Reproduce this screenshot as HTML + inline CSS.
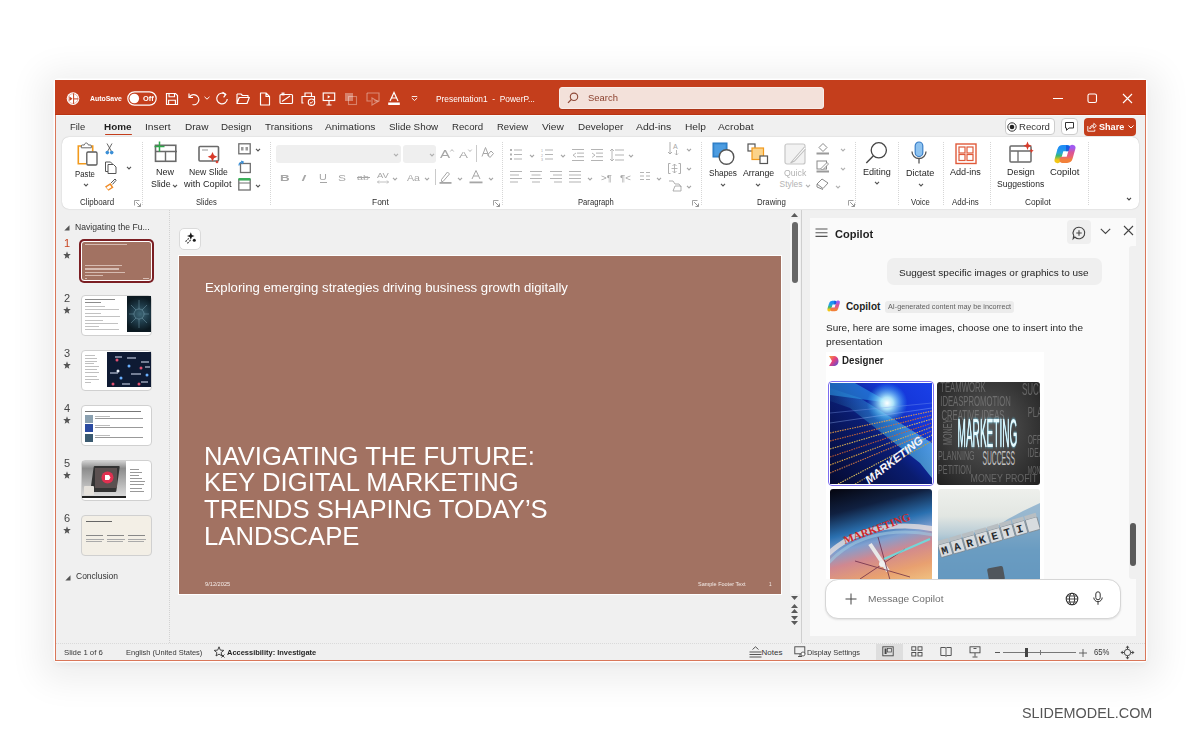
<!DOCTYPE html>
<html><head><meta charset="utf-8">
<style>
*{margin:0;padding:0;box-sizing:border-box}
html,body{width:1200px;height:743px;overflow:hidden;background:#fff;font-family:"Liberation Sans",sans-serif;color:#242424}
.a{position:absolute}
.t{position:absolute;white-space:nowrap;line-height:1}
svg{position:absolute;overflow:visible}
</style></head><body>
<div class="a" style="left:55px;top:80px;width:1091.00px;height:581.00px;border-radius:3px;box-shadow:0 0 0 1.5px #fff,0 6px 34px 14px rgba(0,0,0,.07),0 3px 6px rgba(0,0,0,.05)"></div>
<div class="a" style="left:55px;top:80px;width:1091.00px;height:581.00px;background:#f0f0f0;border:1px solid #d9775a;border-top:none"></div>
<div class="a" style="left:55px;top:80px;width:1091.00px;height:35.00px;background:#c43e1c"></div>
<div class="t" style="left:1021.78px;top:706.62px;font-size:13.8px;color:#555555;transform:scaleX(1.043);transform-origin:0 0;">SLIDEMODEL.COM</div>
<div class="a" style="left:55px;top:114px;width:1091.00px;height:1.00px;background:#b93311"></div>
<div class="a" style="left:56px;top:115px;width:1089.00px;height:1.00px;background:#f8f8f8"></div>
<svg style="left:66px;top:92px;" width="14" height="14" viewBox="0 0 14 14"><circle cx="7" cy="6.6" r="6.3" fill="#fff"/><path d="M7.6 1.3V11.9M7.6 6.9h4.8" stroke="#c43e1c" stroke-width="1"/><path d="M3.3 4.3v4.8l3.2-2.4z" fill="#c43e1c"/><circle cx="7" cy="6.6" r="4.9" fill="none" stroke="#c43e1c" stroke-width=".6" opacity=".6"/></svg>
<div class="t" style="left:90.45px;top:95.11px;font-size:7.2px;color:#ffffff;font-weight:bold;transform:scaleX(0.961);transform-origin:0 0;">AutoSave</div>
<svg style="left:127px;top:90.5px;" width="30" height="15" viewBox="0 0 30 15"><rect x="0.8" y="0.8" width="28.4" height="13.4" rx="6.7" fill="none" stroke="#fff" stroke-width="1.2"/><circle cx="7.3" cy="7.5" r="4.8" fill="#fff"/></svg>
<div class="t" style="left:142.63px;top:95.11px;font-size:7.2px;color:#ffffff;font-weight:bold;transform:scaleX(1.031);transform-origin:0 0;">Off</div>
<svg style="left:165px;top:91.5px;" width="14" height="14" viewBox="0 0 14 14"><path d="M1.5 1.5h9l2 2v9h-11z" fill="none" stroke="#fff" stroke-width="1.2"/><path d="M4 1.5v3.2h5.5V1.5M3.6 12.5V8.2h6.8v4.3" fill="none" stroke="#fff" stroke-width="1.1"/></svg>
<svg style="left:186px;top:91px;" width="14" height="15" viewBox="0 0 14 15"><path d="M3 2.5v4h4" fill="none" stroke="#fff" stroke-width="1.2"/><path d="M3.4 6.3A5 5 0 1 1 6.5 13.5" fill="none" stroke="#fff" stroke-width="1.2"/></svg>
<svg style="left:204px;top:96px;" width="6" height="4" viewBox="0 0 6 4"><path d="M0.5 0.8L3 3.2L5.5 0.8" fill="none" stroke="#fff" stroke-width="1"/></svg>
<svg style="left:215px;top:91px;" width="14" height="15" viewBox="0 0 14 15"><path d="M10.5 3.5A5.3 5.3 0 1 0 12.3 8" fill="none" stroke="#fff" stroke-width="1.2"/><path d="M7.5 1.2l3.3 2.2-2.2 3" fill="none" stroke="#fff" stroke-width="1.2"/></svg>
<svg style="left:236px;top:92px;" width="14" height="13" viewBox="0 0 14 13"><path d="M1 2h4l1.5 1.5H12v2M1 2v9.5h10l2.3-6H3.2L1 11.5" fill="none" stroke="#fff" stroke-width="1.15" stroke-linejoin="round"/></svg>
<svg style="left:259px;top:91.5px;" width="12" height="14" viewBox="0 0 12 14"><path d="M1.5 1h5.5l3.5 3.5v8.5h-9z M7 1v3.5h3.5" fill="none" stroke="#fff" stroke-width="1.15" stroke-linejoin="round"/></svg>
<svg style="left:279px;top:92px;" width="15" height="13" viewBox="0 0 15 13"><rect x="1" y="2.5" width="12.5" height="9" rx="1" fill="none" stroke="#fff" stroke-width="1.15"/><path d="M3 9.5l8-5.5" stroke="#fff" stroke-width="1.1"/><path d="M2.5 0.5h3v3h-3z" fill="#fff" opacity=".85"/></svg>
<svg style="left:301px;top:91.5px;" width="15" height="14" viewBox="0 0 15 14"><path d="M4 4.5V1h6.5v3.5M2.5 11H1V4.5h12.5V8" fill="none" stroke="#fff" stroke-width="1.15"/><circle cx="10.5" cy="10.2" r="3.2" fill="#c43e1c" stroke="#fff" stroke-width="1.15"/><path d="M9 10.3l1.1 1 1.8-2" fill="none" stroke="#fff" stroke-width="1"/></svg>
<svg style="left:322px;top:91.5px;" width="14" height="14" viewBox="0 0 14 14"><rect x="1.2" y="1" width="11.5" height="7.5" fill="none" stroke="#fff" stroke-width="1.15"/><path d="M5.7 3.2v3.2l2.6-1.6z" fill="#fff"/><path d="M7 8.5v4.5M4.5 13h5" stroke="#fff" stroke-width="1.15"/></svg>
<svg style="left:344px;top:92px;" width="14" height="14" viewBox="0 0 14 14"><rect x="1" y="1" width="8" height="8" fill="#fff" opacity=".35"/><rect x="4.5" y="4.5" width="8" height="8" fill="none" stroke="#fff" stroke-width="1.1" opacity=".35"/></svg>
<svg style="left:366px;top:92px;" width="15" height="14" viewBox="0 0 15 14"><path d="M1 1h12v8H8" fill="none" stroke="#fff" stroke-width="1.1" opacity=".4"/><path d="M1 1v8h4M6 6l6 3.5-6 3.5z" fill="none" stroke="#fff" stroke-width="1.1" opacity=".4"/></svg>
<svg style="left:387px;top:91px;" width="14" height="15" viewBox="0 0 14 15"><path d="M3 10L7 1.5 11 10M4.6 7h4.8" fill="none" stroke="#fff" stroke-width="1.2"/><rect x="1.2" y="11.5" width="11.6" height="2.5" fill="#fff"/></svg>
<svg style="left:411px;top:96px;" width="7" height="5" viewBox="0 0 7 5"><path d="M0.8 0.5h5.4M0.8 2l2.7 2.5L6.2 2" fill="none" stroke="#fff" stroke-width="0.9"/></svg>
<div class="t" style="left:435.58px;top:94.58px;font-size:9.0px;color:#ffffff;transform:scaleX(0.930);transform-origin:0 0;">Presentation1&nbsp; -&nbsp; PowerP...</div>
<div class="a" style="left:558.5px;top:86.8px;width:265.50px;height:22.70px;background:#f3e1da;border:1px solid #f8ece8;border-radius:3px;box-shadow:0 1px 0 rgba(0,0,0,.12)"></div>
<svg style="left:567px;top:92px;" width="12" height="12" viewBox="0 0 12 12"><circle cx="7" cy="4.8" r="3.7" fill="none" stroke="#8e4a38" stroke-width="1.1"/><path d="M4.3 7.5L1 10.8" stroke="#8e4a38" stroke-width="1.2"/></svg>
<div class="t" style="left:587.53px;top:94.18px;font-size:9.0px;color:#8a3f2c;transform:scaleX(1.048);transform-origin:0 0;">Search</div>
<div class="a" style="left:1053px;top:97.5px;width:10.00px;height:1.00px;background:#fff"></div>
<svg style="left:1087px;top:93px;" width="11" height="11" viewBox="0 0 11 11"><rect x="1" y="1" width="8.5" height="8.5" rx="1.6" fill="none" stroke="#fff" stroke-width="1.1"/></svg>
<svg style="left:1122px;top:93px;" width="11" height="11" viewBox="0 0 11 11"><path d="M1 1l9 9M10 1l-9 9" stroke="#fff" stroke-width="1.1"/></svg>
<div class="t" style="left:70.33px;top:122.68px;font-size:9.0px;color:#2e2e2e;transform:scaleX(1.041);transform-origin:0 0;">File</div>
<div class="t" style="left:104.21px;top:122.68px;font-size:9.0px;color:#1f1f1f;font-weight:bold;transform:scaleX(1.100);transform-origin:0 0;">Home</div>
<div class="t" style="left:144.79px;top:122.68px;font-size:9.0px;color:#2e2e2e;transform:scaleX(1.137);transform-origin:0 0;">Insert</div>
<div class="t" style="left:184.50px;top:122.68px;font-size:9.0px;color:#2e2e2e;transform:scaleX(1.114);transform-origin:0 0;">Draw</div>
<div class="t" style="left:220.81px;top:122.68px;font-size:9.0px;color:#2e2e2e;transform:scaleX(1.085);transform-origin:0 0;">Design</div>
<div class="t" style="left:264.81px;top:122.68px;font-size:9.0px;color:#2e2e2e;transform:scaleX(1.090);transform-origin:0 0;">Transitions</div>
<div class="t" style="left:325.29px;top:122.68px;font-size:9.0px;color:#2e2e2e;transform:scaleX(1.132);transform-origin:0 0;">Animations</div>
<div class="t" style="left:389.21px;top:122.68px;font-size:9.0px;color:#2e2e2e;transform:scaleX(1.093);transform-origin:0 0;">Slide Show</div>
<div class="t" style="left:451.92px;top:122.68px;font-size:9.0px;color:#2e2e2e;transform:scaleX(1.072);transform-origin:0 0;">Record</div>
<div class="t" style="left:497.33px;top:122.68px;font-size:9.0px;color:#2e2e2e;transform:scaleX(1.054);transform-origin:0 0;">Review</div>
<div class="t" style="left:542.49px;top:122.68px;font-size:9.0px;color:#2e2e2e;transform:scaleX(1.132);transform-origin:0 0;">View</div>
<div class="t" style="left:577.80px;top:122.68px;font-size:9.0px;color:#2e2e2e;transform:scaleX(1.102);transform-origin:0 0;">Developer</div>
<div class="t" style="left:636.08px;top:122.68px;font-size:9.0px;color:#2e2e2e;transform:scaleX(1.157);transform-origin:0 0;">Add-ins</div>
<div class="t" style="left:685.09px;top:122.68px;font-size:9.0px;color:#2e2e2e;transform:scaleX(1.134);transform-origin:0 0;">Help</div>
<div class="t" style="left:718.48px;top:122.68px;font-size:9.0px;color:#2e2e2e;transform:scaleX(1.145);transform-origin:0 0;">Acrobat</div>
<div class="a" style="left:104.5px;top:133.5px;width:27.50px;height:1.80px;background:#c43e1c;border-radius:1px"></div>
<div class="a" style="left:1004.8px;top:117.6px;width:50.00px;height:17.90px;background:#fff;border:1px solid #cdcdcd;border-radius:4px"></div>
<svg style="left:1007px;top:121.5px;" width="11" height="11" viewBox="0 0 11 11"><circle cx="5" cy="5" r="4.2" fill="none" stroke="#333" stroke-width="1"/><circle cx="5" cy="5" r="2.3" fill="#222"/></svg>
<div class="t" style="left:1018.92px;top:122.68px;font-size:9.0px;color:#333;transform:scaleX(1.065);transform-origin:0 0;">Record</div>
<div class="a" style="left:1060.6px;top:117.6px;width:17.40px;height:17.90px;background:#fff;border:1px solid #cdcdcd;border-radius:4px"></div>
<svg style="left:1064px;top:121px;" width="11" height="11" viewBox="0 0 11 11"><path d="M1.5 1.5h8v5.5H5l-2.5 2.3V7H1.5z" fill="none" stroke="#333" stroke-width="1" stroke-linejoin="round"/></svg>
<div class="a" style="left:1084px;top:118px;width:52.00px;height:17.50px;background:#c43e1c;border-radius:4px"></div>
<svg style="left:1086.5px;top:121.5px;" width="10" height="10" viewBox="0 0 10 10"><path d="M.8 4v5.2h7V7.5" fill="none" stroke="#fff" stroke-width=".9"/><path d="M2.8 7c0-2.5 1.6-3.8 4-3.8V1.3l2.6 2.5-2.6 2.5V4.6c-1.6 0-2.8.6-4 2.4z" fill="none" stroke="#fff" stroke-width=".9" stroke-linejoin="round"/></svg>
<div class="t" style="left:1098.95px;top:122.63px;font-size:9.3px;color:#fff;font-weight:bold;transform:scaleX(0.976);transform-origin:0 0;">Share</div>
<svg style="left:1128px;top:125px;" width="6" height="4" viewBox="0 0 6 4"><path d="M0.5 0.5L3 3 5.5 0.5" fill="none" stroke="#fff" stroke-width="1"/></svg>
<div class="a" style="left:61.5px;top:137px;width:1077.50px;height:72.00px;background:#fff;border-radius:7px;box-shadow:0 0 1.2px rgba(0,0,0,.28)"></div>
<svg style="left:75px;top:142px;" width="24" height="24" viewBox="0 0 24 24"><path d="M7 4H3.3V21.8H11" fill="none" stroke="#f29a1d" stroke-width="1.6"/><path d="M14.5 4h3.2v5.5" fill="none" stroke="#f29a1d" stroke-width="1.6"/><path d="M6.3 5.8V4c0-.6.5-1 1-1h2c.3-1.3 1-2 2-2s1.7.7 2 2h2c.6 0 1 .4 1 1v1.8z" fill="#fff" stroke="#6a6a6a" stroke-width="1"/><rect x="11.8" y="10" width="10.2" height="13" rx="1.2" fill="#fff" stroke="#5a5a5a" stroke-width="1.3"/></svg>
<div class="t" style="left:75.31px;top:169.59px;font-size:8.4px;color:#262626;transform:scaleX(0.928);transform-origin:0 0;">Paste</div>
<svg style="left:82.5px;top:182.5px;" width="6" height="4" viewBox="0 0 6 4"><path d="M1 0.9L3 2.9 5 0.9" fill="none" stroke="#555" stroke-width="1.15"/></svg>
<svg style="left:105px;top:143px;" width="9" height="12" viewBox="0 0 9 12"><path d="M2 .5l4.5 8M7 .5L2.5 8.5" stroke="#555" stroke-width="0.9" fill="none"/><circle cx="2.3" cy="9.6" r="1.8" fill="#3b8fd6"/><circle cx="6.7" cy="9.6" r="1.8" fill="#3b8fd6"/></svg>
<svg style="left:103.5px;top:160.5px;" width="13" height="13" viewBox="0 0 13 13"><path d="M4 10.5H1.5V1h5l2 2" fill="none" stroke="#555" stroke-width="1"/><path d="M4 3.5h5.5l2.5 2.5v6.5H4z" fill="#fff" stroke="#555" stroke-width="1"/></svg>
<svg style="left:125.5px;top:165.5px;" width="6" height="4" viewBox="0 0 6 4"><path d="M1 0.9L3 2.9 5 0.9" fill="none" stroke="#555" stroke-width="1.15"/></svg>
<svg style="left:103.5px;top:178px;" width="13" height="13" viewBox="0 0 13 13"><path d="M1 8.5l5.5-3.5 3 4.5-5 3.2z" fill="#f08a24"/><path d="M2.5 9.2L6 7l1.5 2.3-3.5 2.2z" fill="#fff"/><path d="M7 5l4-4 1.2 1.2-3.7 4.2" fill="none" stroke="#555" stroke-width="1"/></svg>
<div class="t" style="left:80.20px;top:198.86px;font-size:8.2px;color:#2e2e2e;transform:scaleX(0.972);transform-origin:0 0;">Clipboard</div>
<svg style="left:133.5px;top:199.5px;" width="7" height="7" viewBox="0 0 7 7"><path d="M0.5 5.5v-5h5" fill="none" stroke="#8a8a8a" stroke-width="0.8"/><path d="M2.2 2.2l4 4M3.5 6.5h3v-3" fill="none" stroke="#777" stroke-width="0.8"/></svg>
<div class="a" style="left:142px;top:142px;width:1.00px;height:64.00px;background:repeating-linear-gradient(#d6d6d6 0 1px,transparent 1px 2px)"></div>
<svg style="left:152.5px;top:141px;" width="26" height="22" viewBox="0 0 26 22"><rect x="2.5" y="4.3" width="20.3" height="16" fill="#fff" stroke="#6a6a6a" stroke-width="1.6"/><path d="M2.5 10.5h21.5M12.5 10.5V20" stroke="#6a6a6a" stroke-width="1.4"/><path d="M6.5 0.5v10M1.5 5.5h10" stroke="#2ea84a" stroke-width="1.5"/></svg>
<div class="t" style="left:155.95px;top:168.49px;font-size:8.4px;color:#262626;transform:scaleX(1.079);transform-origin:0 0;">New</div>
<div class="t" style="left:150.56px;top:180.39px;font-size:8.4px;color:#262626;transform:scaleX(1.057);transform-origin:0 0;">Slide</div>
<svg style="left:172px;top:183.5px;" width="6" height="4" viewBox="0 0 6 4"><path d="M1 0.9L3 2.9 5 0.9" fill="none" stroke="#555" stroke-width="1.15"/></svg>
<svg style="left:197.5px;top:145.2px;" width="25" height="21" viewBox="0 0 25 21"><rect x="1" y="1.5" width="19.5" height="14.5" rx="1" fill="#fff" stroke="#6a6a6a" stroke-width="1.6"/><path d="M4 5h6" stroke="#999" stroke-width="1"/><path d="M14.5 7l1.5 3.3 3.3 1.5-3.3 1.5-1.5 3.3-1.5-3.3-3.3-1.5 3.3-1.5z" fill="#d83b2b"/><path d="M19 15.3l1.6 1.6-1.6 1.6-1.6-1.6z" fill="#d83b2b"/></svg>
<div class="t" style="left:188.57px;top:168.49px;font-size:8.4px;color:#262626;transform:scaleX(1.032);transform-origin:0 0;">New Slide</div>
<div class="t" style="left:184.24px;top:180.39px;font-size:8.4px;color:#262626;transform:scaleX(1.097);transform-origin:0 0;">with Copilot</div>
<svg style="left:237.5px;top:142.5px;" width="13" height="12" viewBox="0 0 13 12"><rect x="0.8" y="0.8" width="11.4" height="10" fill="#fff" stroke="#6f6f6f" stroke-width="1.3"/><path d="M3 4h2.5v3.5H3zM7.5 4H10v3.5H7.5z" fill="#9a9a9a"/></svg>
<svg style="left:254.5px;top:147.5px;" width="6" height="4" viewBox="0 0 6 4"><path d="M1 0.9L3 2.9 5 0.9" fill="none" stroke="#555" stroke-width="1.15"/></svg>
<svg style="left:237.5px;top:160.5px;" width="13" height="12" viewBox="0 0 13 12"><rect x="2.5" y="2.5" width="9.8" height="9" fill="#fff" stroke="#6f6f6f" stroke-width="1.3"/><path d="M1 4.5c0-2.5 2-3.5 4-3.5M3.2 0L5.3 1 4 3" fill="none" stroke="#3b8fd6" stroke-width="1.2"/></svg>
<svg style="left:237.5px;top:178px;" width="13" height="13" viewBox="0 0 13 13"><rect x="0.8" y="1.5" width="11.4" height="10.5" fill="#fff" stroke="#6f6f6f" stroke-width="1.3"/><rect x="0.5" y="0" width="12" height="2.5" fill="#3bb05a"/><path d="M1 5h11" stroke="#6f6f6f" stroke-width="1"/></svg>
<svg style="left:254.5px;top:184px;" width="6" height="4" viewBox="0 0 6 4"><path d="M1 0.9L3 2.9 5 0.9" fill="none" stroke="#555" stroke-width="1.15"/></svg>
<div class="t" style="left:195.62px;top:198.86px;font-size:8.2px;color:#2e2e2e;transform:scaleX(0.928);transform-origin:0 0;">Slides</div>
<div class="a" style="left:270px;top:142px;width:1.00px;height:64.00px;background:repeating-linear-gradient(#d6d6d6 0 1px,transparent 1px 2px)"></div>
<div class="a" style="left:276px;top:145px;width:125.00px;height:17.60px;background:#efefef;border-radius:3px"></div>
<div class="a" style="left:402.6px;top:145px;width:33.40px;height:17.60px;background:#efefef;border-radius:3px"></div>
<svg style="left:393px;top:152.5px;" width="6" height="4" viewBox="0 0 6 4"><path d="M1 0.9L3 2.9 5 0.9" fill="none" stroke="#b0b0b0" stroke-width="1.15"/></svg>
<svg style="left:429px;top:152.5px;" width="6" height="4" viewBox="0 0 6 4"><path d="M1 0.9L3 2.9 5 0.9" fill="none" stroke="#b0b0b0" stroke-width="1.15"/></svg>
<div class="t" style="left:440.24px;top:148.86px;font-size:10.8px;color:#a6a6a6;transform:scaleX(1.399);transform-origin:0 0;">A</div>
<svg style="left:450px;top:148.5px;" width="4" height="3" viewBox="0 0 4 3"><path d="M0.3 2.5L2 .6 3.7 2.5" fill="none" stroke="#a6a6a6" stroke-width=".8"/></svg>
<div class="t" style="left:459.33px;top:149.96px;font-size:9.5px;color:#a6a6a6;transform:scaleX(1.412);transform-origin:0 0;">A</div>
<svg style="left:468px;top:148.5px;" width="4" height="3" viewBox="0 0 4 3"><path d="M0.3 .6L2 2.5 3.7 .6" fill="none" stroke="#a6a6a6" stroke-width=".8"/></svg>
<div class="a" style="left:475.5px;top:145px;width:1.00px;height:17.00px;background:#a6a6a6;opacity:.6"></div>
<svg style="left:481px;top:146px;" width="13" height="12" viewBox="0 0 13 12"><path d="M1 10.5L4.5 1.5 8 10.5M2.2 7.5h4.6" fill="none" stroke="#a6a6a6" stroke-width="1"/><path d="M6.5 9l3.5-4 2.5 2.5-3.5 4z" fill="none" stroke="#a6a6a6" stroke-width="1"/></svg>
<div class="t" style="left:280.33px;top:172.87px;font-size:9.6px;color:#a6a6a6;transform:scaleX(1.399);transform-origin:0 0;font-weight:bold;">B</div>
<div class="t" style="left:301.02px;top:172.87px;font-size:9.6px;color:#a6a6a6;transform:scaleX(2.047);transform-origin:0 0;font-style:italic;">I</div>
<div class="t" style="left:319.46px;top:172.60px;font-size:8.5px;color:#a6a6a6;transform:scaleX(1.279);transform-origin:0 0;">U</div>
<div class="a" style="left:320px;top:181.6px;width:7.00px;height:0.90px;background:#a6a6a6"></div>
<div class="t" style="left:338.40px;top:172.87px;font-size:9.6px;color:#a6a6a6;transform:scaleX(1.243);transform-origin:0 0;">S</div>
<div class="t" style="left:357.47px;top:173.53px;font-size:8px;color:#a6a6a6;transform:scaleX(1.326);transform-origin:0 0;">ab</div>
<div class="a" style="left:357px;top:177.3px;width:13.00px;height:0.80px;background:#a6a6a6"></div>
<div class="t" style="left:376.53px;top:172.03px;font-size:8px;color:#a6a6a6;transform:scaleX(1.171);transform-origin:0 0;">AV</div>
<svg style="left:377px;top:179.8px;" width="12" height="4" viewBox="0 0 12 4"><path d="M0.5 2h11M2 .5L.5 2 2 3.5M10 .5l1.5 1.5L10 3.5" fill="none" stroke="#a6a6a6" stroke-width=".7"/></svg>
<svg style="left:391.5px;top:176.5px;" width="6" height="4" viewBox="0 0 6 4"><path d="M1 0.9L3 2.9 5 0.9" fill="none" stroke="#a6a6a6" stroke-width="1.15"/></svg>
<div class="t" style="left:407.47px;top:172.67px;font-size:9.6px;color:#a6a6a6;transform:scaleX(1.104);transform-origin:0 0;">Aa</div>
<svg style="left:424px;top:176.5px;" width="6" height="4" viewBox="0 0 6 4"><path d="M1 0.9L3 2.9 5 0.9" fill="none" stroke="#a6a6a6" stroke-width="1.15"/></svg>
<div class="a" style="left:434.5px;top:169px;width:1.00px;height:16.00px;background:#a6a6a6;opacity:.6"></div>
<svg style="left:439px;top:170px;" width="13" height="14" viewBox="0 0 13 14"><path d="M2.5 9.5L8.5 2l2 2-6.5 7.5H2.5z" fill="none" stroke="#a6a6a6" stroke-width="1"/><rect x="0.5" y="12" width="12" height="1.8" fill="#a6a6a6"/></svg>
<svg style="left:457px;top:176.5px;" width="6" height="4" viewBox="0 0 6 4"><path d="M1 0.9L3 2.9 5 0.9" fill="none" stroke="#a6a6a6" stroke-width="1.15"/></svg>
<svg style="left:469px;top:169px;" width="14" height="15" viewBox="0 0 14 15"><path d="M3 10L7 1.5 11 10M4.5 7h5" fill="none" stroke="#a6a6a6" stroke-width="1"/><rect x="0.5" y="12.5" width="13" height="1.8" fill="#a6a6a6"/></svg>
<svg style="left:487.5px;top:176.5px;" width="6" height="4" viewBox="0 0 6 4"><path d="M1 0.9L3 2.9 5 0.9" fill="none" stroke="#a6a6a6" stroke-width="1.15"/></svg>
<div class="t" style="left:372.08px;top:198.86px;font-size:8.2px;color:#2e2e2e;transform:scaleX(1.025);transform-origin:0 0;">Font</div>
<svg style="left:493px;top:199.5px;" width="7" height="7" viewBox="0 0 7 7"><path d="M0.5 5.5v-5h5" fill="none" stroke="#8a8a8a" stroke-width="0.8"/><path d="M2.2 2.2l4 4M3.5 6.5h3v-3" fill="none" stroke="#777" stroke-width="0.8"/></svg>
<div class="a" style="left:502px;top:142px;width:1.00px;height:64.00px;background:repeating-linear-gradient(#d6d6d6 0 1px,transparent 1px 2px)"></div>
<svg style="left:510px;top:148.5px;" width="13" height="12" viewBox="0 0 13 12"><rect x="0" y="0" width="2" height="2" fill="#b0b0b0"/><rect x="0" y="4.5" width="2" height="2" fill="#b0b0b0"/><rect x="0" y="9" width="2" height="2" fill="#b0b0b0"/><g transform="translate(4,.5)"><rect x="0" y="0.0" width="8" height="1" fill="#b4b4b4"/><rect x="0" y="4.5" width="8" height="1" fill="#b4b4b4"/><rect x="0" y="9.0" width="8" height="1" fill="#b4b4b4"/></g></svg>
<svg style="left:529px;top:154px;" width="6" height="4" viewBox="0 0 6 4"><path d="M1 0.9L3 2.9 5 0.9" fill="none" stroke="#a6a6a6" stroke-width="1.15"/></svg>
<svg style="left:541px;top:148.5px;" width="13" height="12" viewBox="0 0 13 12"><text x="0" y="3" font-size="3.5" fill="#a6a6a6">1</text><text x="0" y="7.5" font-size="3.5" fill="#a6a6a6">2</text><text x="0" y="12" font-size="3.5" fill="#a6a6a6">3</text><g transform="translate(4,.5)"><rect x="0" y="0.0" width="8" height="1" fill="#b4b4b4"/><rect x="0" y="4.5" width="8" height="1" fill="#b4b4b4"/><rect x="0" y="9.0" width="8" height="1" fill="#b4b4b4"/></g></svg>
<svg style="left:559.5px;top:154px;" width="6" height="4" viewBox="0 0 6 4"><path d="M1 0.9L3 2.9 5 0.9" fill="none" stroke="#a6a6a6" stroke-width="1.15"/></svg>
<svg style="left:572px;top:148.5px;" width="13" height="12" viewBox="0 0 13 12"><g><rect x="0" y="0" width="12" height="1" fill="#b4b4b4"/></g><g transform="translate(5,3.6)"><rect x="0" y="0.0" width="7" height="1" fill="#b4b4b4"/><rect x="0" y="3.6" width="7" height="1" fill="#b4b4b4"/></g><g transform="translate(0,11)"><rect x="0" y="0" width="12" height="1" fill="#b4b4b4"/></g><path d="M4 4l-3 2.2 3 2.2" fill="none" stroke="#a6a6a6" stroke-width=".8"/></svg>
<svg style="left:591px;top:148.5px;" width="13" height="12" viewBox="0 0 13 12"><g><rect x="0" y="0" width="12" height="1" fill="#b4b4b4"/></g><g transform="translate(5,3.6)"><rect x="0" y="0.0" width="7" height="1" fill="#b4b4b4"/><rect x="0" y="3.6" width="7" height="1" fill="#b4b4b4"/></g><g transform="translate(0,11)"><rect x="0" y="0" width="12" height="1" fill="#b4b4b4"/></g><path d="M1 4l3 2.2-3 2.2" fill="none" stroke="#a6a6a6" stroke-width=".8"/></svg>
<svg style="left:610px;top:147.5px;" width="14" height="14" viewBox="0 0 14 14"><path d="M2 1v12M0 3l2-2 2 2M0 11l2 2 2-2" fill="none" stroke="#a6a6a6" stroke-width=".8"/><g transform="translate(5,1.5)"><rect x="0" y="0" width="9" height="1" fill="#b4b4b4"/><rect x="0" y="5" width="9" height="1" fill="#b4b4b4"/><rect x="0" y="10" width="9" height="1" fill="#b4b4b4"/></g></svg>
<svg style="left:628px;top:154px;" width="6" height="4" viewBox="0 0 6 4"><path d="M1 0.9L3 2.9 5 0.9" fill="none" stroke="#a6a6a6" stroke-width="1.15"/></svg>
<svg style="left:510px;top:171px;" width="12" height="12" viewBox="0 0 12 12"><rect x="0" y="0" width="12" height="1" fill="#b4b4b4"/><g transform="translate(0,3.5)"><rect x="0" y="0" width="9" height="1" fill="#b4b4b4"/></g><g transform="translate(0,7)"><rect x="0" y="0" width="12" height="1" fill="#b4b4b4"/></g><g transform="translate(0,10.5)"><rect x="0" y="0" width="8" height="1" fill="#b4b4b4"/></g></svg>
<svg style="left:530px;top:171px;" width="12" height="12" viewBox="0 0 12 12"><rect x="0" y="0" width="12" height="1" fill="#b4b4b4"/><g transform="translate(1.5,3.5)"><rect x="0" y="0" width="9" height="1" fill="#b4b4b4"/></g><g transform="translate(0,7)"><rect x="0" y="0" width="12" height="1" fill="#b4b4b4"/></g><g transform="translate(2,10.5)"><rect x="0" y="0" width="8" height="1" fill="#b4b4b4"/></g></svg>
<svg style="left:550px;top:171px;" width="12" height="12" viewBox="0 0 12 12"><rect x="0" y="0" width="12" height="1" fill="#b4b4b4"/><g transform="translate(3,3.5)"><rect x="0" y="0" width="9" height="1" fill="#b4b4b4"/></g><g transform="translate(0,7)"><rect x="0" y="0" width="12" height="1" fill="#b4b4b4"/></g><g transform="translate(4,10.5)"><rect x="0" y="0" width="8" height="1" fill="#b4b4b4"/></g></svg>
<svg style="left:569px;top:171px;" width="12" height="12" viewBox="0 0 12 12"><rect x="0" y="0.0" width="12" height="1" fill="#b4b4b4"/><rect x="0" y="3.5" width="12" height="1" fill="#b4b4b4"/><rect x="0" y="7.0" width="12" height="1" fill="#b4b4b4"/><rect x="0" y="10.5" width="12" height="1" fill="#b4b4b4"/></svg>
<svg style="left:586.5px;top:177px;" width="6" height="4" viewBox="0 0 6 4"><path d="M1 0.9L3 2.9 5 0.9" fill="none" stroke="#a6a6a6" stroke-width="1.15"/></svg>
<div class="t" style="left:600.52px;top:174.30px;font-size:8.5px;color:#a6a6a6;transform:scaleX(1.139);transform-origin:0 0;">&gt;¶</div>
<div class="t" style="left:619.52px;top:174.30px;font-size:8.5px;color:#a6a6a6;transform:scaleX(1.139);transform-origin:0 0;">¶&lt;</div>
<svg style="left:640px;top:172px;" width="11" height="10" viewBox="0 0 11 10"><g><rect x="0" y="0.0" width="4" height="1" fill="#b4b4b4"/><rect x="0" y="3.5" width="4" height="1" fill="#b4b4b4"/><rect x="0" y="7.0" width="4" height="1" fill="#b4b4b4"/></g><g transform="translate(6,0)"><rect x="0" y="0.0" width="4" height="1" fill="#b4b4b4"/><rect x="0" y="3.5" width="4" height="1" fill="#b4b4b4"/><rect x="0" y="7.0" width="4" height="1" fill="#b4b4b4"/></g></svg>
<svg style="left:656px;top:177px;" width="6" height="4" viewBox="0 0 6 4"><path d="M1 0.9L3 2.9 5 0.9" fill="none" stroke="#a6a6a6" stroke-width="1.15"/></svg>
<svg style="left:668px;top:142px;" width="12" height="13" viewBox="0 0 12 13"><path d="M2 0v12M0 10l2 2 2-2" fill="none" stroke="#a6a6a6" stroke-width=".9"/><text x="5" y="7" font-size="7" fill="#a6a6a6">A</text><path d="M8.5 8v5M7 11.5l1.5 1.5 1.5-1.5" fill="none" stroke="#a6a6a6" stroke-width=".8"/></svg>
<svg style="left:686px;top:148px;" width="6" height="4" viewBox="0 0 6 4"><path d="M1 0.9L3 2.9 5 0.9" fill="none" stroke="#a6a6a6" stroke-width="1.15"/></svg>
<svg style="left:668px;top:163px;" width="13" height="11" viewBox="0 0 13 11"><path d="M2.5 .5H.5v10h2M10.5 .5h2v10h-2" fill="none" stroke="#a6a6a6" stroke-width=".9"/><path d="M6.5 1v9M4.5 3l2-2 2 2M4.5 8l2 2 2-2" fill="none" stroke="#a6a6a6" stroke-width=".8"/><path d="M3.5 5.5h6" stroke="#a6a6a6" stroke-width=".8"/></svg>
<svg style="left:686px;top:167px;" width="6" height="4" viewBox="0 0 6 4"><path d="M1 0.9L3 2.9 5 0.9" fill="none" stroke="#a6a6a6" stroke-width="1.15"/></svg>
<svg style="left:668px;top:180px;" width="14" height="12" viewBox="0 0 14 12"><path d="M1 1h4l2 3h4l2 3M7 6h6v5H5z" fill="none" stroke="#a6a6a6" stroke-width=".9"/></svg>
<svg style="left:686px;top:185px;" width="6" height="4" viewBox="0 0 6 4"><path d="M1 0.9L3 2.9 5 0.9" fill="none" stroke="#a6a6a6" stroke-width="1.15"/></svg>
<div class="t" style="left:577.62px;top:198.86px;font-size:8.2px;color:#2e2e2e;transform:scaleX(0.933);transform-origin:0 0;">Paragraph</div>
<svg style="left:692px;top:199.5px;" width="7" height="7" viewBox="0 0 7 7"><path d="M0.5 5.5v-5h5" fill="none" stroke="#8a8a8a" stroke-width="0.8"/><path d="M2.2 2.2l4 4M3.5 6.5h3v-3" fill="none" stroke="#777" stroke-width="0.8"/></svg>
<div class="a" style="left:701px;top:142px;width:1.00px;height:64.00px;background:repeating-linear-gradient(#d6d6d6 0 1px,transparent 1px 2px)"></div>
<svg style="left:712px;top:142px;" width="24" height="24" viewBox="0 0 24 24"><rect x="1" y="1" width="14" height="14" fill="#3b8fd6" stroke="#2676c0" stroke-width="1"/><rect x="2.5" y="2.5" width="11" height="11" fill="#5aa7e8" opacity=".6"/><circle cx="14.5" cy="15" r="7.3" fill="#fff" stroke="#555" stroke-width="1.4"/></svg>
<div class="t" style="left:709.19px;top:169.09px;font-size:8.4px;color:#262626;transform:scaleX(0.984);transform-origin:0 0;">Shapes</div>
<svg style="left:720px;top:182.5px;" width="6" height="4" viewBox="0 0 6 4"><path d="M1 0.9L3 2.9 5 0.9" fill="none" stroke="#555" stroke-width="1.15"/></svg>
<svg style="left:747px;top:143px;" width="22" height="22" viewBox="0 0 22 22"><rect x="1" y="1" width="7" height="7" fill="#fff" stroke="#555" stroke-width="1.2"/><rect x="5" y="5" width="11.5" height="11.5" fill="#fbd38a" stroke="#f29a1d" stroke-width="1.2"/><rect x="13" y="13" width="7.5" height="7.5" fill="#fff" stroke="#555" stroke-width="1.2"/></svg>
<div class="t" style="left:742.56px;top:169.09px;font-size:8.4px;color:#262626;transform:scaleX(1.049);transform-origin:0 0;">Arrange</div>
<svg style="left:755px;top:182.5px;" width="6" height="4" viewBox="0 0 6 4"><path d="M1 0.9L3 2.9 5 0.9" fill="none" stroke="#555" stroke-width="1.15"/></svg>
<svg style="left:784px;top:143px;" width="23" height="23" viewBox="0 0 23 23"><rect x="1" y="1" width="20" height="20" rx="2" fill="#f2f2f2" stroke="#c6c6c6" stroke-width="1.2"/><path d="M20.5 4L10 16l-3.5 4 4-2 11-12" fill="#fff" stroke="#bdbdbd" stroke-width="1.1"/></svg>
<div class="t" style="left:784.06px;top:169.09px;font-size:8.4px;color:#b3b3b3;transform:scaleX(1.040);transform-origin:0 0;">Quick</div>
<div class="t" style="left:779.58px;top:180.39px;font-size:8.4px;color:#b3b3b3;">Styles</div>
<svg style="left:805px;top:183.5px;" width="6" height="4" viewBox="0 0 6 4"><path d="M1 0.9L3 2.9 5 0.9" fill="none" stroke="#b3b3b3" stroke-width="1.15"/></svg>
<svg style="left:816px;top:142px;" width="14" height="13" viewBox="0 0 14 13"><path d="M3 5.5L7 1.5l4 4-4 4z" fill="none" stroke="#8a8a8a" stroke-width="1"/><rect x="0.5" y="10.5" width="12.5" height="2" fill="#9a9a9a"/></svg>
<svg style="left:840px;top:147.5px;" width="6" height="4" viewBox="0 0 6 4"><path d="M1 0.9L3 2.9 5 0.9" fill="none" stroke="#b0b0b0" stroke-width="1.15"/></svg>
<svg style="left:816px;top:160px;" width="14" height="13" viewBox="0 0 14 13"><rect x="1" y="1" width="9.5" height="8" fill="none" stroke="#8a8a8a" stroke-width="1"/><path d="M5 8.5l6-6 1.5 1.5-6 6z" fill="#fff" stroke="#8a8a8a" stroke-width=".9"/><rect x="0.5" y="10.5" width="12.5" height="2" fill="#9a9a9a"/></svg>
<svg style="left:840px;top:166.5px;" width="6" height="4" viewBox="0 0 6 4"><path d="M1 0.9L3 2.9 5 0.9" fill="none" stroke="#b0b0b0" stroke-width="1.15"/></svg>
<svg style="left:816px;top:178px;" width="14" height="12" viewBox="0 0 14 12"><path d="M1 6l5-5 6 4-5 5.5z M1 6v3l6 2.5" fill="none" stroke="#8a8a8a" stroke-width="1"/></svg>
<svg style="left:834.5px;top:184.5px;" width="6" height="4" viewBox="0 0 6 4"><path d="M1 0.9L3 2.9 5 0.9" fill="none" stroke="#b0b0b0" stroke-width="1.15"/></svg>
<div class="t" style="left:757.41px;top:198.86px;font-size:8.2px;color:#2e2e2e;transform:scaleX(0.958);transform-origin:0 0;">Drawing</div>
<svg style="left:848px;top:199.5px;" width="7" height="7" viewBox="0 0 7 7"><path d="M0.5 5.5v-5h5" fill="none" stroke="#8a8a8a" stroke-width="0.8"/><path d="M2.2 2.2l4 4M3.5 6.5h3v-3" fill="none" stroke="#777" stroke-width="0.8"/></svg>
<div class="a" style="left:855px;top:142px;width:1.00px;height:64.00px;background:repeating-linear-gradient(#d6d6d6 0 1px,transparent 1px 2px)"></div>
<svg style="left:865px;top:141px;" width="24" height="24" viewBox="0 0 24 24"><circle cx="13.8" cy="9.3" r="7.6" fill="#fff" stroke="#444" stroke-width="1.3"/><path d="M8.2 15L1.3 22" stroke="#444" stroke-width="1.4"/></svg>
<div class="t" style="left:862.54px;top:167.89px;font-size:8.4px;color:#262626;transform:scaleX(1.084);transform-origin:0 0;">Editing</div>
<svg style="left:873.5px;top:181px;" width="6" height="4" viewBox="0 0 6 4"><path d="M1 0.9L3 2.9 5 0.9" fill="none" stroke="#555" stroke-width="1.15"/></svg>
<div class="a" style="left:898px;top:142px;width:1.00px;height:64.00px;background:repeating-linear-gradient(#d6d6d6 0 1px,transparent 1px 2px)"></div>
<svg style="left:910px;top:141px;" width="20" height="25" viewBox="0 0 20 25"><rect x="5.2" y="1" width="7.6" height="14.5" rx="3.8" fill="#8ec3f0" stroke="#3b7fc8" stroke-width="1.2"/><path d="M2 10.5a7 7 0 0 0 14 0" fill="none" stroke="#555" stroke-width="1.3"/><path d="M9 17.5v5" stroke="#555" stroke-width="1.3"/></svg>
<div class="t" style="left:906.04px;top:169.49px;font-size:8.4px;color:#262626;transform:scaleX(1.084);transform-origin:0 0;">Dictate</div>
<svg style="left:917.5px;top:183px;" width="6" height="4" viewBox="0 0 6 4"><path d="M1 0.9L3 2.9 5 0.9" fill="none" stroke="#555" stroke-width="1.15"/></svg>
<div class="t" style="left:910.62px;top:198.86px;font-size:8.2px;color:#2e2e2e;transform:scaleX(0.938);transform-origin:0 0;">Voice</div>
<div class="a" style="left:942.5px;top:142px;width:1.00px;height:64.00px;background:repeating-linear-gradient(#d6d6d6 0 1px,transparent 1px 2px)"></div>
<svg style="left:954.5px;top:142.5px;" width="23" height="22" viewBox="0 0 23 22"><rect x="1" y="1" width="20" height="19.5" fill="#fff" stroke="#e05a3a" stroke-width="1.4"/><rect x="4" y="4" width="6" height="6" fill="none" stroke="#e05a3a" stroke-width="1.2"/><rect x="12" y="4" width="6" height="6" fill="none" stroke="#e05a3a" stroke-width="1.2"/><rect x="4" y="11.5" width="6" height="6" fill="none" stroke="#e05a3a" stroke-width="1.2"/><rect x="12" y="11.5" width="6" height="6" fill="none" stroke="#e05a3a" stroke-width="1.2"/></svg>
<div class="t" style="left:950.35px;top:167.89px;font-size:8.4px;color:#262626;transform:scaleX(1.083);transform-origin:0 0;">Add-ins</div>
<div class="t" style="left:951.60px;top:198.86px;font-size:8.2px;color:#2e2e2e;transform:scaleX(0.965);transform-origin:0 0;">Add-ins</div>
<div class="a" style="left:990px;top:142px;width:1.00px;height:64.00px;background:repeating-linear-gradient(#d6d6d6 0 1px,transparent 1px 2px)"></div>
<svg style="left:1009px;top:141px;" width="25" height="23" viewBox="0 0 25 23"><rect x="1" y="5" width="21" height="16" rx="1" fill="#fff" stroke="#6a6a6a" stroke-width="1.5"/><path d="M1.5 10h20M9 10v10.5" stroke="#6a6a6a" stroke-width="1.3"/><path d="M18.5 0.5l1.2 3 3 1.2-3 1.2-1.2 3-1.2-3-3-1.2 3-1.2z" fill="#d83b2b"/><path d="M22.5 7.5l.7 1.5 1.5.7-1.5.7-.7 1.5-.7-1.5-1.5-.7 1.5-.7z" fill="#d83b2b"/></svg>
<div class="t" style="left:1006.55px;top:167.89px;font-size:8.4px;color:#262626;transform:scaleX(1.065);transform-origin:0 0;">Design</div>
<div class="t" style="left:997.07px;top:180.39px;font-size:8.4px;color:#262626;transform:scaleX(1.024);transform-origin:0 0;">Suggestions</div>
<svg style="left:1054px;top:143.7px;" width="22" height="20" viewBox="0 0 22 20"><defs><linearGradient id="cg1" x1="0" y1="0" x2="0" y2="1"><stop offset="0" stop-color="#1f8ef5"/><stop offset=".4" stop-color="#27a8d8"/><stop offset=".65" stop-color="#3fb86a"/><stop offset="1" stop-color="#f2c616"/></linearGradient><linearGradient id="cg2" x1="0" y1="0" x2="0" y2="1"><stop offset="0" stop-color="#a05af0"/><stop offset=".35" stop-color="#d8549a"/><stop offset=".7" stop-color="#e8607a"/><stop offset="1" stop-color="#f2803a"/></linearGradient></defs><path d="M3.6 16L6.4 6.2Q6.9 4.2 8.8 4.2H13.5" fill="none" stroke="url(#cg1)" stroke-width="6.2" stroke-linecap="round" stroke-linejoin="round"/><path d="M18.4 4L15.6 13.8Q15.1 15.8 13.2 15.8H8.5" fill="none" stroke="url(#cg2)" stroke-width="6.2" stroke-linecap="round" stroke-linejoin="round"/><path d="M12 1.2Q15 1 16 3L14.5 7.2H12z" fill="#1030d0" opacity=".5"/></svg>
<div class="t" style="left:1049.53px;top:167.89px;font-size:8.4px;color:#262626;transform:scaleX(1.130);transform-origin:0 0;">Copilot</div>
<div class="t" style="left:1024.59px;top:198.86px;font-size:8.2px;color:#2e2e2e;transform:scaleX(1.012);transform-origin:0 0;">Copilot</div>
<div class="a" style="left:1088px;top:142px;width:1.00px;height:64.00px;background:repeating-linear-gradient(#d6d6d6 0 1px,transparent 1px 2px)"></div>
<svg style="left:1125.5px;top:197px;" width="6" height="4" viewBox="0 0 6 4"><path d="M1 0.9L3 2.9 5 0.9" fill="none" stroke="#444" stroke-width="1.15"/></svg>
<div class="a" style="left:169px;top:210px;width:1.00px;height:433.00px;background:repeating-linear-gradient(#d2d2d2 0 1px,transparent 1px 2px)"></div>
<svg style="left:64px;top:225px;" width="6" height="6" viewBox="0 0 6 6"><path d="M5.5 0.3V5.5H0.3z" fill="#555"/></svg>
<div class="t" style="left:75.47px;top:222.68px;font-size:9.0px;color:#333;transform:scaleX(0.956);transform-origin:0 0;">Navigating the Fu...</div>
<svg style="left:65px;top:575px;" width="6" height="6" viewBox="0 0 6 6"><path d="M5.5 0.3V5.5H0.3z" fill="#555"/></svg>
<div class="t" style="left:75.57px;top:571.68px;font-size:9.0px;color:#333;transform:scaleX(0.945);transform-origin:0 0;">Conclusion</div>
<div class="t" style="left:63.65px;top:238.97px;font-size:10.2px;color:#c8431f;transform:scaleX(1.079);transform-origin:0 0;">1</div>
<svg style="left:62.5px;top:251px;" width="8" height="8" viewBox="0 0 8 8"><path d="M4 .3l1 2.6 2.8.2-2.2 1.8.7 2.8L4 6.2 1.7 7.7l.7-2.8L.2 3.1 3 2.9z" fill="#555"/></svg>
<div class="t" style="left:63.65px;top:293.97px;font-size:10.2px;color:#444;transform:scaleX(1.079);transform-origin:0 0;">2</div>
<svg style="left:62.5px;top:306px;" width="8" height="8" viewBox="0 0 8 8"><path d="M4 .3l1 2.6 2.8.2-2.2 1.8.7 2.8L4 6.2 1.7 7.7l.7-2.8L.2 3.1 3 2.9z" fill="#555"/></svg>
<div class="t" style="left:63.65px;top:348.97px;font-size:10.2px;color:#444;transform:scaleX(1.079);transform-origin:0 0;">3</div>
<svg style="left:62.5px;top:361px;" width="8" height="8" viewBox="0 0 8 8"><path d="M4 .3l1 2.6 2.8.2-2.2 1.8.7 2.8L4 6.2 1.7 7.7l.7-2.8L.2 3.1 3 2.9z" fill="#555"/></svg>
<div class="t" style="left:63.65px;top:404.37px;font-size:10.2px;color:#444;transform:scaleX(1.079);transform-origin:0 0;">4</div>
<svg style="left:62.5px;top:416.4px;" width="8" height="8" viewBox="0 0 8 8"><path d="M4 .3l1 2.6 2.8.2-2.2 1.8.7 2.8L4 6.2 1.7 7.7l.7-2.8L.2 3.1 3 2.9z" fill="#555"/></svg>
<div class="t" style="left:63.65px;top:458.97px;font-size:10.2px;color:#444;transform:scaleX(1.079);transform-origin:0 0;">5</div>
<svg style="left:62.5px;top:471px;" width="8" height="8" viewBox="0 0 8 8"><path d="M4 .3l1 2.6 2.8.2-2.2 1.8.7 2.8L4 6.2 1.7 7.7l.7-2.8L.2 3.1 3 2.9z" fill="#555"/></svg>
<div class="t" style="left:63.65px;top:513.67px;font-size:10.2px;color:#444;transform:scaleX(1.079);transform-origin:0 0;">6</div>
<svg style="left:62.5px;top:525.7px;" width="8" height="8" viewBox="0 0 8 8"><path d="M4 .3l1 2.6 2.8.2-2.2 1.8.7 2.8L4 6.2 1.7 7.7l.7-2.8L.2 3.1 3 2.9z" fill="#555"/></svg>
<div class="a" style="left:79px;top:238.7px;width:75.00px;height:44.10px;background:#7b1f24;border-radius:5px"></div>
<div class="a" style="left:81px;top:240.7px;width:71.00px;height:40.10px;background:#fff;border-radius:3.5px"></div>
<div class="a" style="left:82px;top:241.7px;width:69.00px;height:38.10px;background:#a27262;border-radius:2.5px"></div>
<div class="a" style="left:84.5px;top:244px;width:42.50px;height:1.00px;background:rgba(248,236,230,.6)"></div>
<div class="a" style="left:84.5px;top:265.0px;width:37.00px;height:1.40px;background:rgba(248,236,230,.6)"></div>
<div class="a" style="left:84.5px;top:268.3px;width:34.00px;height:1.40px;background:rgba(248,236,230,.6)"></div>
<div class="a" style="left:84.5px;top:271.6px;width:40.00px;height:1.40px;background:rgba(248,236,230,.6)"></div>
<div class="a" style="left:84.5px;top:274.9px;width:18.00px;height:1.40px;background:rgba(248,236,230,.6)"></div>
<div class="a" style="left:84.5px;top:278.2px;width:2.50px;height:0.60px;background:rgba(250,240,236,.6)"></div>
<div class="a" style="left:143px;top:278.2px;width:6.00px;height:0.60px;background:rgba(250,240,236,.6)"></div>
<div class="a" style="left:81px;top:294.7px;width:71.00px;height:41.00px;background:#fff;border:1px solid #d0d0d0;border-radius:4px;overflow:hidden"></div>
<div class="a" style="left:127px;top:296px;width:24.00px;height:36.00px;background:radial-gradient(circle at 55% 50%,#3f6878 0,#1e3a48 40%,#0c1a22 75%)"></div>
<svg style="left:128px;top:297px;" width="22" height="34" viewBox="0 0 22 34"><g stroke="#8fb8c8" stroke-width=".5" fill="none" opacity=".8"><circle cx="11" cy="17" r="5"/><path d="M11 12V3M6 17H1M16 17h5M8 13L3 8M14 13l5-5M8 21l-5 5M14 21l5 5M11 22v9"/></g></svg>
<div class="a" style="left:85px;top:299px;width:30.00px;height:1.10px;background:#8c8c8c"></div>
<div class="a" style="left:85px;top:302px;width:16.00px;height:1.10px;background:#8c8c8c"></div>
<div class="a" style="left:85px;top:306px;width:20.00px;height:1.00px;background:#c2c2c2"></div>
<div class="a" style="left:85px;top:308.5px;width:34.00px;height:1.00px;background:#c2c2c2"></div>
<div class="a" style="left:85px;top:313px;width:16.00px;height:1.00px;background:#c2c2c2"></div>
<div class="a" style="left:85px;top:315.5px;width:35.00px;height:1.00px;background:#c2c2c2"></div>
<div class="a" style="left:85px;top:320px;width:18.00px;height:1.00px;background:#c2c2c2"></div>
<div class="a" style="left:85px;top:322.5px;width:33.00px;height:1.00px;background:#c2c2c2"></div>
<div class="a" style="left:85px;top:326px;width:14.00px;height:1.00px;background:#c2c2c2"></div>
<div class="a" style="left:85px;top:328.5px;width:34.00px;height:1.00px;background:#c2c2c2"></div>
<div class="a" style="left:81px;top:350.2px;width:71.00px;height:41.00px;background:#fff;border:1px solid #d0d0d0;border-radius:4px;overflow:hidden"></div>
<div class="a" style="left:107px;top:352px;width:44.00px;height:35.00px;background:#0e1a33"></div>
<svg style="left:115px;top:358px;" width="4" height="4" viewBox="0 0 4 4"><circle cx="2" cy="2" r="1.5" fill="#e05070"/></svg>
<svg style="left:127px;top:364px;" width="4" height="4" viewBox="0 0 4 4"><circle cx="2" cy="2" r="1.5" fill="#6ab0ff"/></svg>
<svg style="left:139px;top:366px;" width="4" height="4" viewBox="0 0 4 4"><circle cx="2" cy="2" r="1.5" fill="#e05070"/></svg>
<svg style="left:111px;top:382px;" width="4" height="4" viewBox="0 0 4 4"><circle cx="2" cy="2" r="1.5" fill="#e05070"/></svg>
<svg style="left:119px;top:376px;" width="4" height="4" viewBox="0 0 4 4"><circle cx="2" cy="2" r="1.5" fill="#6ab0ff"/></svg>
<svg style="left:145px;top:373px;" width="4" height="4" viewBox="0 0 4 4"><circle cx="2" cy="2" r="1.5" fill="#6ab0ff"/></svg>
<svg style="left:137px;top:382px;" width="4" height="4" viewBox="0 0 4 4"><circle cx="2" cy="2" r="1.5" fill="#e05070"/></svg>
<svg style="left:116px;top:369px;" width="4" height="4" viewBox="0 0 4 4"><circle cx="2" cy="2" r="1.5" fill="#e8eef8"/></svg>
<div class="a" style="left:115px;top:356px;width:7.00px;height:2.00px;background:rgba(200,210,230,.55)"></div>
<div class="a" style="left:127px;top:357px;width:9.00px;height:2.00px;background:rgba(200,210,230,.55)"></div>
<div class="a" style="left:141px;top:361px;width:8.00px;height:2.00px;background:rgba(200,210,230,.55)"></div>
<div class="a" style="left:110px;top:372px;width:8.00px;height:2.00px;background:rgba(200,210,230,.55)"></div>
<div class="a" style="left:131px;top:373px;width:10.00px;height:2.00px;background:rgba(200,210,230,.55)"></div>
<div class="a" style="left:141px;top:381px;width:7.00px;height:2.00px;background:rgba(200,210,230,.55)"></div>
<div class="a" style="left:122px;top:383px;width:8.00px;height:2.00px;background:rgba(200,210,230,.55)"></div>
<div class="a" style="left:145px;top:366px;width:5.00px;height:2.00px;background:rgba(200,210,230,.55)"></div>
<div class="a" style="left:84.5px;top:355px;width:10.00px;height:1.00px;background:#c0c0c0"></div>
<div class="a" style="left:84.5px;top:358px;width:12.00px;height:1.00px;background:#c0c0c0"></div>
<div class="a" style="left:84.5px;top:361px;width:12.00px;height:1.00px;background:#c0c0c0"></div>
<div class="a" style="left:84.5px;top:363px;width:9.00px;height:1.00px;background:#c0c0c0"></div>
<div class="a" style="left:84.5px;top:366px;width:14.00px;height:1.00px;background:#c0c0c0"></div>
<div class="a" style="left:84.5px;top:369px;width:12.00px;height:1.00px;background:#c0c0c0"></div>
<div class="a" style="left:84.5px;top:372px;width:14.00px;height:1.00px;background:#c0c0c0"></div>
<div class="a" style="left:84.5px;top:376px;width:12.00px;height:1.00px;background:#c0c0c0"></div>
<div class="a" style="left:84.5px;top:379px;width:14.00px;height:1.00px;background:#c0c0c0"></div>
<div class="a" style="left:84.5px;top:382px;width:6.00px;height:1.00px;background:#c0c0c0"></div>
<div class="a" style="left:81px;top:405px;width:71.00px;height:41.00px;background:#fff;border:1px solid #d0d0d0;border-radius:4px;overflow:hidden"></div>
<div class="a" style="left:84.5px;top:410.5px;width:56.50px;height:1.00px;background:#777"></div>
<div class="a" style="left:84.5px;top:414.5px;width:8.50px;height:8.00px;background:#8aa0b0"></div>
<div class="a" style="left:94.5px;top:415.5px;width:15.50px;height:0.80px;background:#bbb"></div>
<div class="a" style="left:94.5px;top:417.5px;width:48.50px;height:0.80px;background:#999"></div>
<div class="a" style="left:84.5px;top:424.0px;width:8.50px;height:8.00px;background:#2a4aa0"></div>
<div class="a" style="left:94.5px;top:425.0px;width:15.50px;height:0.80px;background:#bbb"></div>
<div class="a" style="left:94.5px;top:427.0px;width:48.50px;height:0.80px;background:#999"></div>
<div class="a" style="left:84.5px;top:433.5px;width:8.50px;height:8.00px;background:#3a5a70"></div>
<div class="a" style="left:94.5px;top:434.5px;width:15.50px;height:0.80px;background:#bbb"></div>
<div class="a" style="left:94.5px;top:436.5px;width:48.50px;height:0.80px;background:#999"></div>
<div class="a" style="left:81px;top:460.2px;width:71.00px;height:41.00px;background:#fff;border:1px solid #d0d0d0;border-radius:4px;overflow:hidden"></div>
<div class="a" style="left:82px;top:461px;width:44.00px;height:36.50px;background:linear-gradient(#cfcfcf 0,#8c8c8c 20%,#b5b5b5 60%,#e0e0e0 100%)"></div>
<div class="a" style="left:92px;top:466px;width:26.00px;height:26.00px;background:#333;transform:skewX(-8deg);border-radius:1px"></div>
<div class="a" style="left:95px;top:468px;width:22.00px;height:20.00px;background:#5b5050"></div>
<svg style="left:101px;top:471px;" width="13" height="13" viewBox="0 0 13 13"><circle cx="6.5" cy="6.5" r="6" fill="#e03050"/><path d="M4 4h4l1.5 2.5L8 9H4z" fill="#fff"/></svg>
<div class="a" style="left:84px;top:486px;width:10.00px;height:9.00px;background:#e6e2dc;border-radius:1px"></div>
<div class="a" style="left:82px;top:496px;width:44.00px;height:2.00px;background:#222"></div>
<div class="a" style="left:130px;top:469px;width:9.00px;height:0.80px;background:#999"></div>
<div class="a" style="left:130px;top:472px;width:12.00px;height:0.80px;background:#999"></div>
<div class="a" style="left:130px;top:475px;width:9.00px;height:0.80px;background:#999"></div>
<div class="a" style="left:130px;top:478px;width:12.00px;height:0.80px;background:#999"></div>
<div class="a" style="left:130px;top:481px;width:15.00px;height:0.80px;background:#999"></div>
<div class="a" style="left:130px;top:484px;width:14.00px;height:0.80px;background:#999"></div>
<div class="a" style="left:130px;top:488px;width:12.00px;height:0.80px;background:#999"></div>
<div class="a" style="left:130px;top:491px;width:14.00px;height:0.80px;background:#999"></div>
<div class="a" style="left:81px;top:515.3px;width:71.00px;height:41.00px;background:#f3efe6;border:1px solid #d0d0d0;border-radius:4px;overflow:hidden"></div>
<div class="a" style="left:86px;top:521px;width:26.00px;height:1.20px;background:#666"></div>
<div class="a" style="left:86px;top:535px;width:17.00px;height:0.80px;background:#888"></div>
<div class="a" style="left:86px;top:538.5px;width:18.00px;height:0.80px;background:#aaa"></div>
<div class="a" style="left:86px;top:540.5px;width:16.00px;height:0.80px;background:#aaa"></div>
<div class="a" style="left:107px;top:535px;width:17.00px;height:0.80px;background:#888"></div>
<div class="a" style="left:107px;top:538.5px;width:18.00px;height:0.80px;background:#aaa"></div>
<div class="a" style="left:107px;top:540.5px;width:16.00px;height:0.80px;background:#aaa"></div>
<div class="a" style="left:128px;top:535px;width:17.00px;height:0.80px;background:#888"></div>
<div class="a" style="left:128px;top:538.5px;width:18.00px;height:0.80px;background:#aaa"></div>
<div class="a" style="left:128px;top:540.5px;width:16.00px;height:0.80px;background:#aaa"></div>
<div class="a" style="left:179.3px;top:227.5px;width:22.20px;height:22.50px;background:#fff;border:1px solid #dadada;border-radius:5px"></div>
<svg style="left:183px;top:231px;" width="15" height="15" viewBox="0 0 15 15"><path d="M7.8 1.2l1.1 2.7 2.7 1.1-2.7 1.1-1.1 2.7-1.1-2.7-2.7-1.1 2.7-1.1z" fill="#1a1a1a"/><circle cx="11.3" cy="9.3" r="1.5" fill="#1a1a1a"/><path d="M5.8 7.3L2.3 10.8M7.6 9.2L4 12.8" stroke="#333" stroke-width="1.1" stroke-dasharray="1.8 1"/></svg>
<div class="a" style="left:178px;top:255px;width:604.00px;height:340.00px;background:#fff"></div>
<div class="a" style="left:179px;top:256px;width:602.00px;height:338.40px;background:#a27262"></div>
<div class="t" style="left:204.84px;top:281.46px;font-size:13.4px;color:#fff;transform:scaleX(0.983);transform-origin:0 0;">Exploring emerging strategies driving business growth digitally</div>
<div class="t" style="left:204.2px;top:442.6px;font-size:26.3px;line-height:26.8px;color:#fff;transform:scaleX(.976);transform-origin:0 0">NAVIGATING THE FUTURE:<br>KEY DIGITAL MARKETING<br>TRENDS SHAPING TODAY’S<br>LANDSCAPE</div>
<div class="t" style="left:204.52px;top:581.71px;font-size:5.9px;color:#f4ece8;transform:scaleX(0.963);transform-origin:0 0;">9/12/2025</div>
<div class="t" style="left:697.72px;top:581.71px;font-size:5.9px;color:#f4ece8;transform:scaleX(0.932);transform-origin:0 0;">Sample Footer Text</div>
<div class="t" style="left:769.37px;top:581.71px;font-size:5.9px;color:#f4ece8;transform:scaleX(0.789);transform-origin:0 0;">1</div>
<svg style="left:790px;top:212px;" width="9" height="6" viewBox="0 0 9 6"><path d="M1 5h7L4.5 1z" fill="#5a5a5a"/></svg>
<div class="a" style="left:790px;top:219px;width:9.50px;height:375.00px;background:#f6f6f6"></div>
<div class="a" style="left:791.6px;top:221.5px;width:6.40px;height:61.00px;background:#686868;border-radius:3.2px"></div>
<svg style="left:790px;top:595px;" width="9" height="6" viewBox="0 0 9 6"><path d="M1 1h7L4.5 5z" fill="#5a5a5a"/></svg>
<svg style="left:790px;top:603px;" width="9" height="11" viewBox="0 0 9 11"><path d="M1 5h7L4.5 1zM1 10h7L4.5 6z" fill="#5a5a5a"/></svg>
<svg style="left:790px;top:615px;" width="9" height="11" viewBox="0 0 9 11"><path d="M1 1h7L4.5 5zM1 6h7L4.5 10z" fill="#5a5a5a"/></svg>
<div class="a" style="left:801px;top:210px;width:1.00px;height:433.00px;background:#cfcfcf"></div>
<div class="a" style="left:810px;top:218.3px;width:326.00px;height:417.70px;background:#fafafa"></div>
<svg style="left:815px;top:228px;" width="13" height="10" viewBox="0 0 13 10"><path d="M0.5 1h12M0.5 4.7h12M0.5 8.4h12" stroke="#555" stroke-width="1.1"/></svg>
<div class="t" style="left:835.45px;top:228.82px;font-size:11.2px;color:#1f1f1f;font-weight:bold;transform:scaleX(0.988);transform-origin:0 0;font-weight:600;">Copilot</div>
<div class="a" style="left:1067.3px;top:220.4px;width:23.70px;height:23.60px;background:#efefef;border-radius:4px"></div>
<svg style="left:1072px;top:226px;" width="14" height="14" viewBox="0 0 14 14"><path d="M7 1.2a5.8 5.8 0 1 1-4.2 9.8L1.2 12.6l.5-3A5.8 5.8 0 0 1 7 1.2z" fill="none" stroke="#444" stroke-width="1.1"/><path d="M7 4.3v5.4M4.3 7h5.4" stroke="#444" stroke-width="1.1"/></svg>
<svg style="left:1099.5px;top:227.5px;" width="11" height="7" viewBox="0 0 11 7"><path d="M.8 .8L5.5 5.5 10.2 .8" fill="none" stroke="#444" stroke-width="1.1"/></svg>
<svg style="left:1123px;top:225px;" width="11" height="11" viewBox="0 0 11 11"><path d="M1 1l9 9M10 1l-9 9" stroke="#444" stroke-width="1.1"/></svg>
<div class="a" style="left:887px;top:257.7px;width:215.00px;height:27.80px;background:#efefef;border-radius:7px"></div>
<div class="t" style="left:899.10px;top:268.24px;font-size:9.4px;color:#242424;transform:scaleX(1.064);transform-origin:0 0;">Suggest specific images or graphics to use</div>
<svg style="left:826.6px;top:299.9px;" width="14" height="13" viewBox="0 0 14 13"><g transform="scale(.6)"><path d="M3.6 16L6.4 6.2Q6.9 4.2 8.8 4.2H13.5" fill="none" stroke="url(#cg1)" stroke-width="6.2" stroke-linecap="round" stroke-linejoin="round"/><path d="M18.4 4L15.6 13.8Q15.1 15.8 13.2 15.8H8.5" fill="none" stroke="url(#cg2)" stroke-width="6.2" stroke-linecap="round" stroke-linejoin="round"/><path d="M12 1.2Q15 1 16 3L14.5 7.2H12z" fill="#1030d0" opacity=".5"/></g></svg>
<div class="t" style="left:845.90px;top:301.94px;font-size:10.0px;color:#1f1f1f;font-weight:bold;font-weight:600;">Copilot</div>
<div class="a" style="left:885.2px;top:300.7px;width:128.80px;height:12.30px;background:#ececec;border-radius:3px"></div>
<div class="t" style="left:888.14px;top:303.91px;font-size:6.6px;color:#616161;transform:scaleX(1.097);transform-origin:0 0;">AI-generated content may be incorrect</div>
<div class="t" style="left:825.80px;top:322.54px;font-size:9.4px;color:#242424;transform:scaleX(1.065);transform-origin:0 0;">Sure, here are some images, choose one to insert into the</div>
<div class="t" style="left:825.79px;top:336.54px;font-size:9.4px;color:#242424;transform:scaleX(1.095);transform-origin:0 0;">presentation</div>
<div class="a" style="left:826px;top:351.5px;width:218.00px;height:227.50px;background:#fff"></div>
<svg style="left:828px;top:354.5px;" width="11" height="12" viewBox="0 0 11 12"><defs><linearGradient id="dg" x1="0" y1="0" x2="1" y2="1"><stop offset="0" stop-color="#f5a03a"/><stop offset=".45" stop-color="#e8407a"/><stop offset="1" stop-color="#4a50e0"/></linearGradient></defs><path d="M1 1h4.5c3 0 5 2 5 5s-2 5-5 5H1l3-5z" fill="url(#dg)"/></svg>
<div class="t" style="left:842.41px;top:356.14px;font-size:10.0px;color:#1f1f1f;font-weight:bold;transform:scaleX(0.972);transform-origin:0 0;font-weight:600;">Designer</div>
<div class="a" style="left:827.5px;top:380.5px;width:106.00px;height:105.00px;border:1.6px solid #7b6cf0;border-radius:4px;background:#fff"></div>
<svg style="left:829.5px;top:382.5px;overflow:hidden;" width="102" height="101" viewBox="0 0 102 101"><defs>
<linearGradient id="i1bg" x1="0" y1="1" x2="1" y2="0"><stop offset="0" stop-color="#050a30"/><stop offset=".45" stop-color="#0a1c70"/><stop offset=".75" stop-color="#1436d8"/><stop offset="1" stop-color="#1a40e8"/></linearGradient>
<radialGradient id="i1fl" cx=".56" cy=".2" r=".2"><stop offset="0" stop-color="#ffffff"/><stop offset=".3" stop-color="#c0f8ff" stop-opacity=".9"/><stop offset="1" stop-color="#30c0ff" stop-opacity="0"/></radialGradient>
<linearGradient id="i1st" x1="0" y1="0" x2="1" y2="0"><stop offset="0" stop-color="#40d8ff" stop-opacity=".1"/><stop offset=".6" stop-color="#50e0ff" stop-opacity=".7"/><stop offset="1" stop-color="#80f0ff" stop-opacity=".9"/></linearGradient>
</defs>
<rect width="102" height="101" fill="url(#i1bg)"/>
<path d="M0 5L30 15 102 60 102 95 90 80 20 25 0 18z" fill="url(#i1st)" opacity=".6"/>
<path d="M0 0h25L60 20 0 12z" fill="#30a8f0" opacity=".5"/>
<rect width="102" height="101" fill="url(#i1fl)"/>
<g stroke-width="1.1" opacity=".9" stroke-dasharray="1.5 1">
<path d="M0 50L102 28" stroke="#f0a040"/><path d="M0 58L102 32" stroke="#e07030"/><path d="M0 66L102 36" stroke="#f0c050"/><path d="M0 74L102 40" stroke="#d06030"/><path d="M0 82L102 44" stroke="#f0b040"/><path d="M0 90L102 48" stroke="#e08040"/><path d="M8 101L102 52" stroke="#f0d060"/><path d="M25 101L102 58" stroke="#c0a040"/>
</g>
<g stroke-width=".6" opacity=".6"><path d="M0 40L102 25" stroke="#a0c0ff"/><path d="M0 30L102 20" stroke="#80a0f0"/></g>
<g transform="translate(64 77) rotate(-38)"><text x="0" y="4" text-anchor="middle" font-size="11.5" font-style="italic" font-weight="bold" fill="#f4f4ff" font-family="Liberation Sans">MARKETING</text></g></svg>
<div class="a" style="left:937px;top:382px;width:103.00px;height:102.50px;border-radius:3px;background:radial-gradient(ellipse at 50% 45%,#5a5a5a 0,#3a3a3a 55%,#202020 100%);overflow:hidden"></div>
<svg style="left:937px;top:382px;overflow:hidden;" width="103" height="102" viewBox="0 0 103 102"><g font-family="Liberation Sans" fill="#9a9a9a" opacity=".5">
<text x="6" y="10" font-size="14" transform="scale(.55 1)">TEAMWORK</text>
<text x="6" y="24" font-size="14" transform="scale(.55 1)">IDEASPROMOTION</text>
<text x="8" y="38" font-size="14" transform="scale(.55 1)">CREATIVE IDEAS</text>
<text x="2" y="78" font-size="13" transform="scale(.55 1)">PLANNING</text>
<text x="2" y="92" font-size="13" transform="scale(.55 1)">PETITION</text>
<text x="42" y="100" font-size="11" transform="scale(.8 1)">MONEY PROFIT</text>
<text x="170" y="13" font-size="16" transform="scale(.5 1)">SUCC</text>
<text x="165" y="35" font-size="14" transform="scale(.55 1)">PLAN</text>
<text x="165" y="62" font-size="12" transform="scale(.55 1)">OFFICE</text>
<text x="165" y="75" font-size="12" transform="scale(.55 1)">IDEAS</text>
<text x="165" y="92" font-size="10" transform="scale(.55 1)">MONEY</text>
<text x="0" y="0" font-size="12" transform="translate(15 63) rotate(-90) scale(.6 1)">MONEY</text>
</g>
<text x="83.3" y="65.5" font-size="41" fill="#e8fbff" font-family="Liberation Sans" transform="scale(.246 1)" style="filter:drop-shadow(0 0 1.5px #7df)">MARKETING</text>
<text x="139.6" y="83" font-size="20.6" fill="#c0c0c0" font-family="Liberation Sans" transform="scale(.326 1)">SUCCESS</text></svg>
<div class="a" style="left:829.5px;top:489px;width:102.00px;height:90.00px;border-radius:3px 3px 0 0;background:linear-gradient(165deg,#05050f 0,#102040 22%,#2a70b0 42%,#80a0d0 55%,#d08890 68%,#e8a070 85%,#f0c080 100%);overflow:hidden"></div>
<svg style="left:829.5px;top:489px;overflow:hidden;" width="102" height="90" viewBox="0 0 102 90"><ellipse cx="75" cy="105" rx="95" ry="68" fill="none" stroke="#f0e4e0" stroke-width="5" opacity=".75"/><ellipse cx="75" cy="105" rx="88" ry="62" fill="none" stroke="#a0c8e0" stroke-width="3" opacity=".6"/><text x="12" y="42" font-size="11" fill="#d02828" font-weight="bold" font-family="Liberation Serif" transform="rotate(-20 50 40)">MARKETING</text><path d="M40 55L58 82" stroke="#e8e8e8" stroke-width="4"/><path d="M25 72L80 88M48 48L62 98M30 90L75 60" stroke="#602040" stroke-width="1" opacity=".7"/><circle cx="52" cy="75" r="3" fill="#f0f0f0"/><path d="M54 70L100 50" stroke="#60e8e8" stroke-width="2" opacity=".8"/></svg>
<div class="a" style="left:937.5px;top:489px;width:102.00px;height:90.00px;border-radius:3px 3px 0 0;background:linear-gradient(180deg,#eef0ec 0,#e2e6e2 30%,#b8ccd6 50%,#80acc8 68%,#6a9cc0 100%);overflow:hidden"></div>
<svg style="left:937.5px;top:489px;overflow:hidden;" width="102" height="90" viewBox="0 0 102 90"><path d="M0 58L18 50 30 46 45 40 58 38 70 30 85 22 102 14V90H0z" fill="#5a90c0" opacity=".55"/><path d="M0 70L102 40V90H0z" fill="#6a9cc0" opacity=".5"/><g transform="rotate(-16 50 50)"><g fill="#d8dcdf" stroke="#7a8288" stroke-width=".7"><rect x="0" y="42" width="12" height="13" rx="1"/><rect x="13" y="42" width="12" height="13" rx="1"/><rect x="26" y="42" width="12" height="13" rx="1"/><rect x="39" y="42" width="12" height="13" rx="1"/><rect x="52" y="42" width="12" height="13" rx="1"/><rect x="65" y="42" width="12" height="13" rx="1"/><rect x="78" y="42" width="12" height="13" rx="1"/><rect x="91" y="42" width="12" height="13" rx="1"/></g><g fill="#b8bec2"><rect x="0" y="38" width="12" height="4"/><rect x="13" y="38" width="12" height="4"/><rect x="26" y="38" width="12" height="4"/><rect x="39" y="38" width="12" height="4"/><rect x="52" y="38" width="12" height="4"/><rect x="65" y="38" width="12" height="4"/><rect x="78" y="38" width="12" height="4"/><rect x="91" y="38" width="12" height="4"/></g><text x="2" y="52.5" font-size="11" font-weight="bold" fill="#252a30" font-family="Liberation Mono" letter-spacing="6.4">MARKETI</text></g><rect x="50" y="78" width="16" height="14" rx="2" fill="#50565c" transform="rotate(-10 58 85)"/></svg>
<div class="a" style="left:1129px;top:246px;width:7.30px;height:332.50px;background:#f0f0f0;border-radius:3px 0 0 3px"></div>
<div class="a" style="left:1130.2px;top:523px;width:5.80px;height:43.00px;background:#5a5a5a;border-radius:3px"></div>
<div class="a" style="left:825.4px;top:579px;width:295.30px;height:39.60px;background:#fff;border:1px solid #d6d6d6;border-radius:13px;box-shadow:0 1px 2px rgba(0,0,0,.10)"></div>
<svg style="left:844.5px;top:592.5px;" width="12" height="12" viewBox="0 0 12 12"><path d="M6 .5v11M.5 6h11" stroke="#444" stroke-width="1"/></svg>
<div class="t" style="left:868.09px;top:594.44px;font-size:9.4px;color:#707070;transform:scaleX(1.082);transform-origin:0 0;">Message Copilot</div>
<svg style="left:1065px;top:592px;" width="14" height="14" viewBox="0 0 14 14"><circle cx="7" cy="7" r="5.8" fill="none" stroke="#333" stroke-width="1.05"/><ellipse cx="7" cy="7" rx="2.6" ry="5.8" fill="none" stroke="#333" stroke-width="1"/><path d="M1.2 7h11.6M2 4h10M2 10h10" stroke="#333" stroke-width=".9"/></svg>
<svg style="left:1093px;top:591px;" width="10" height="15" viewBox="0 0 10 15"><rect x="2.8" y=".8" width="4.4" height="8" rx="2.2" fill="none" stroke="#333" stroke-width="1"/><path d="M.8 6.5a4.2 4.2 0 0 0 8.4 0M5 10.8v3" fill="none" stroke="#333" stroke-width="1"/></svg>
<div class="a" style="left:56px;top:643px;width:1090.00px;height:1.00px;background:repeating-linear-gradient(90deg,#dadada 0 1px,transparent 1px 2px)"></div>
<div class="t" style="left:64.11px;top:649.03px;font-size:8.0px;color:#363636;transform:scaleX(0.969);transform-origin:0 0;">Slide 1 of 6</div>
<div class="t" style="left:126.13px;top:649.03px;font-size:8.0px;color:#363636;transform:scaleX(0.933);transform-origin:0 0;">English (United States)</div>
<svg style="left:213px;top:646px;" width="13" height="12" viewBox="0 0 13 12"><path d="M6 .8l1.3 3.3 3.5.3-2.7 2.2.9 3.4L6 8.1 3 10l.9-3.4L1.2 4.4l3.5-.3z" fill="none" stroke="#333" stroke-width=".9"/><path d="M8.5 8.5l3 3M11.5 8.5l-3 3" stroke="#333" stroke-width=".9"/></svg>
<div class="t" style="left:227.13px;top:649.07px;font-size:7.6px;color:#1f1f1f;font-weight:bold;transform:scaleX(0.983);transform-origin:0 0;">Accessibility: Investigate</div>
<svg style="left:749px;top:646px;" width="13" height="12" viewBox="0 0 13 12"><path d="M3.5 3.5L6.5 .8 9.5 3.5" fill="none" stroke="#444" stroke-width=".9"/><path d="M.5 6h12M.5 8.5h12M.5 11h12" stroke="#444" stroke-width=".9"/></svg>
<div class="t" style="left:761.60px;top:649.03px;font-size:8.0px;color:#363636;">Notes</div>
<svg style="left:794px;top:646px;" width="12" height="11" viewBox="0 0 12 11"><rect x=".8" y=".8" width="10" height="7" fill="none" stroke="#444" stroke-width=".9"/><path d="M4 10.5h4M6 8v2.5" stroke="#444" stroke-width=".9"/><circle cx="9" cy="8" r="2" fill="#fff" stroke="#444" stroke-width=".8"/></svg>
<div class="t" style="left:807.13px;top:649.03px;font-size:8.0px;color:#363636;transform:scaleX(0.924);transform-origin:0 0;">Display Settings</div>
<div class="a" style="left:875.6px;top:644px;width:27.10px;height:15.50px;background:#dedede"></div>
<svg style="left:882px;top:646px;" width="12" height="11" viewBox="0 0 12 11"><rect x=".8" y=".8" width="10.4" height="9" fill="none" stroke="#444" stroke-width=".9"/><rect x="2.6" y="2.5" width="2" height="5.5" fill="#444"/><rect x="5.5" y="2.5" width="4" height="3.5" fill="none" stroke="#444" stroke-width=".7"/></svg>
<svg style="left:911px;top:646px;" width="12" height="11" viewBox="0 0 12 11"><rect x=".8" y=".8" width="4" height="3.5" fill="none" stroke="#444" stroke-width=".9"/><rect x="7" y=".8" width="4" height="3.5" fill="none" stroke="#444" stroke-width=".9"/><rect x=".8" y="6.5" width="4" height="3.5" fill="none" stroke="#444" stroke-width=".9"/><rect x="7" y="6.5" width="4" height="3.5" fill="none" stroke="#444" stroke-width=".9"/></svg>
<svg style="left:940px;top:646px;" width="12" height="11" viewBox="0 0 12 11"><path d="M.8 1.5h4.5l.7.7.7-.7h4.5v8H7l-1 .8-1-.8H.8z" fill="none" stroke="#444" stroke-width=".9"/><path d="M6 2v8" stroke="#444" stroke-width=".8"/></svg>
<svg style="left:969px;top:646px;" width="12" height="12" viewBox="0 0 12 12"><rect x="1" y=".8" width="10" height="6" fill="none" stroke="#444" stroke-width=".9"/><path d="M6 7v3.5M3.5 11h5M4.5 2.5h3" stroke="#444" stroke-width=".9"/></svg>
<div class="a" style="left:994.5px;top:651.8px;width:5.00px;height:0.90px;background:#555"></div>
<div class="a" style="left:1003px;top:652px;width:73.00px;height:1.00px;background:#777"></div>
<div class="a" style="left:1024.5px;top:648px;width:3.00px;height:8.50px;background:#444"></div>
<div class="a" style="left:1040px;top:650px;width:1.00px;height:5.00px;background:#777"></div>
<svg style="left:1079px;top:648.5px;" width="8" height="8" viewBox="0 0 8 8"><path d="M4 0v8M0 4h8" stroke="#555" stroke-width=".9"/></svg>
<div class="t" style="left:1093.61px;top:648.86px;font-size:8.2px;color:#363636;transform:scaleX(0.946);transform-origin:0 0;">65%</div>
<svg style="left:1121px;top:646px;" width="13" height="13" viewBox="0 0 13 13"><circle cx="6.5" cy="6.5" r="3.2" fill="none" stroke="#333" stroke-width=".9"/><path d="M6.5 .3v3M6.5 9.7v3M.3 6.5h3M9.7 6.5h3M4.8 1.8L6.5 .3 8.2 1.8M4.8 11.2l1.7 1.5 1.7-1.5M1.8 4.8L.3 6.5l1.5 1.7M11.2 4.8l1.5 1.7-1.5 1.7" fill="none" stroke="#333" stroke-width=".9"/></svg>
</body></html>
